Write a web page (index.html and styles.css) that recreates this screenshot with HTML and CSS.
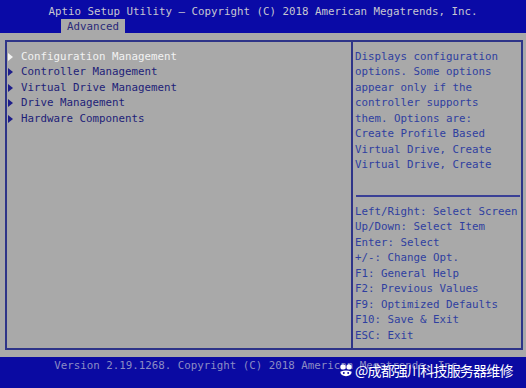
FILE: index.html
```html
<!DOCTYPE html>
<html>
<head>
<meta charset="utf-8">
<link rel="stylesheet" href="styles.css">
</head>
<body>
<div class="screen">
  <header class="top">
    <div class="title">Aptio Setup Utility – Copyright (C) 2018 American Megatrends, Inc.</div>
    <div class="tabs"><span class="tab">Advanced</span></div>
  </header>
  <main class="main">
    <div class="frame">
      <div class="menu">
        <div class="item selected"><span class="arrow"></span>Configuration Management</div>
        <div class="item"><span class="arrow"></span>Controller Management</div>
        <div class="item"><span class="arrow"></span>Virtual Drive Management</div>
        <div class="item"><span class="arrow"></span>Drive Management</div>
        <div class="item"><span class="arrow"></span>Hardware Components</div>
      </div>
      <div class="side">
        <div class="help">
          <div>Displays configuration</div>
          <div>options. Some options</div>
          <div>appear only if the</div>
          <div>controller supports</div>
          <div>them. Options are:</div>
          <div>Create Profile Based</div>
          <div>Virtual Drive, Create</div>
          <div>Virtual Drive, Create</div>
        </div>
        <div class="divider"></div>
        <div class="keys">
          <div>Left/Right: Select Screen</div>
          <div>Up/Down: Select Item</div>
          <div>Enter: Select</div>
          <div>+/-: Change Opt.</div>
          <div>F1: General Help</div>
          <div>F2: Previous Values</div>
          <div>F9: Optimized Defaults</div>
          <div>F10: Save &amp; Exit</div>
          <div>ESC: Exit</div>
        </div>
      </div>
    </div>
  </main>
  <footer class="bottom">
    <div class="version">Version 2.19.1268. Copyright (C) 2018 American Megatrends, Inc.</div>
    <div class="watermark">
      <svg class="wm-icon" viewBox="0 0 16 16" width="14" height="14">
        <ellipse cx="4.5" cy="4.5" rx="3" ry="3" fill="#fff"/>
        <ellipse cx="11.5" cy="4.5" rx="3" ry="3" fill="#fff"/>
        <path d="M1.5 10 Q8 7 14.5 10 Q14 15 8 15 Q2 15 1.5 10Z" fill="#fff"/>
        <circle cx="5.5" cy="11.5" r="1.1" fill="#0a0aa2"/>
        <circle cx="10.5" cy="11.5" r="1.1" fill="#0a0aa2"/>
      </svg>
      <span>@成都强川科技服务器维修</span>
    </div>
  </footer>
</div>
</body>
</html>
```

FILE: styles.css
```css
* { box-sizing: border-box; }
html, body { margin: 0; padding: 0; }
body {
  width: 526px;
  height: 388px;
  overflow: hidden;
  background: #a9a9a9;
  font-family: "DejaVu Sans Mono", "Liberation Mono", monospace;
  font-size: 10.8px;
}
.screen {
  width: 526px;
  height: 388px;
  display: flex;
  flex-direction: column;
  position: relative;
}
.top {
  height: 33px;
  background: #0a0aa6;
  display: flex;
  flex-direction: column;
}
.title {
  color: #c6c6d0;
  text-align: center;
  line-height: 14px;
  padding-top: 5px;
}
.tabs {
  padding-left: 61px;
  display: flex;
  flex: 1;
  align-items: flex-end;
}
.tab {
  background: #a9a9a9;
  color: #2a2a7a;
  width: 64px;
  height: 15px;
  line-height: 15px;
  text-align: center;
}
.main {
  height: 324px;
  padding: 7px 3px 7px 5px;
}
.frame {
  height: 310px;
  border: 2px solid #2e3488;
  display: grid;
  grid-template-columns: 344px 1fr;
}
.menu {
  padding-top: 7px;
}
.item {
  color: #1e1e78;
  line-height: 15.45px;
  white-space: nowrap;
  display: flex;
  align-items: center;
}
.item.selected { color: #f2f2f2; }
.arrow {
  width: 0;
  height: 0;
  margin-left: 1px;
  margin-right: 8px;
  border-top: 4px solid transparent;
  border-bottom: 4px solid transparent;
  border-left: 5px solid #1e1e8a;
}
.item.selected .arrow { border-left-color: #f2f2f2; }
.side {
  border-left: 2px solid #2e3488;
  display: flex;
  flex-direction: column;
  color: #2f3fa0;
  padding-left: 2px;
}
.help {
  padding-top: 7px;
  line-height: 15.45px;
  height: 153px;
  white-space: nowrap;
}
.divider {
  height: 2px;
  background: #3a4096;
  margin: 0 1px 0 1px;
}
.keys {
  padding-top: 7px;
  line-height: 15.45px;
  white-space: nowrap;
}
.bottom {
  flex: 1;
  background: #0a0aa2;
  position: relative;
}
.version {
  color: #8c8cc4;
  text-align: center;
  line-height: 14px;
  padding-top: 2px;
  padding-right: 8px;
}
.watermark {
  position: absolute;
  left: 339px;
  top: 4px;
  display: flex;
  align-items: center;
  gap: 2px;
  color: #ffffff;
  white-space: nowrap;
  font-family: "Noto Sans CJK SC", "Noto Sans", sans-serif;
  font-size: 14px;
  line-height: 18px;
  letter-spacing: -0.8px;
}
.wm-icon { flex: none; }
```
